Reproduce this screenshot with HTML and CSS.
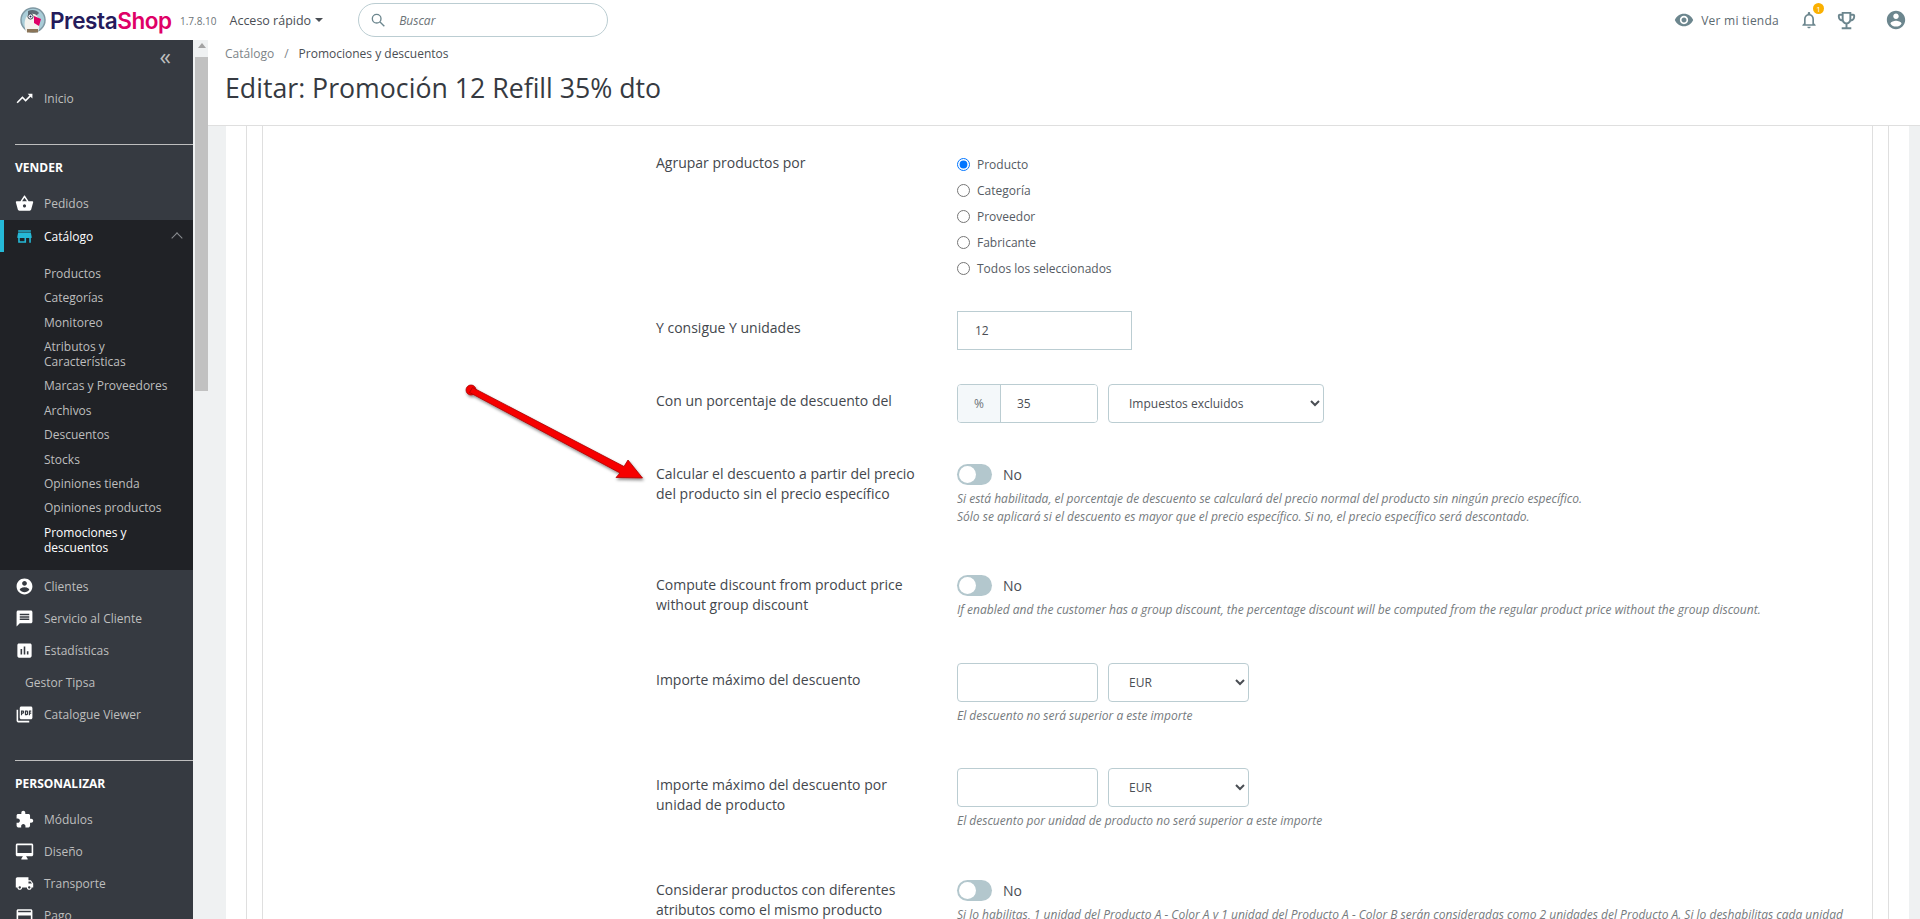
FILE: index.html
```html
<!DOCTYPE html>
<html lang="es">
<head>
    <meta charset="utf-8">
    <title>Editar: Promoción 12 Refill 35% dto</title>
    <link rel="stylesheet" href="styles.css">
</head>
<body>
    <svg class="sprite" xmlns="http://www.w3.org/2000/svg">
        <symbol id="i-trend" viewBox="0 0 24 24"><path d="M16 6l2.29 2.29-4.88 4.88-4-4L2 16.59 3.41 18l6-6 4 4 6.3-6.29L22 12V6z"/></symbol>
        <symbol id="i-basket" viewBox="0 0 24 24"><path d="M17.21 9l-4.38-6.56c-.19-.28-.51-.42-.83-.42-.32 0-.64.14-.83.43L6.79 9H2c-.55 0-1 .45-1 1 0 .09.01.18.04.27l2.54 9.27c.23.84 1 1.46 1.92 1.46h13c.92 0 1.69-.62 1.93-1.46l2.54-9.27L23 10c0-.55-.45-1-1-1h-4.79zM9 9l3-4.4L15 9H9zm3 8c-1.1 0-2-.9-2-2s.9-2 2-2 2 .9 2 2-.9 2-2 2z"/></symbol>
        <symbol id="i-store" viewBox="0 0 24 24"><path d="M20 4H4v2h16V4zm1 10v-2l-1-5H4l-1 5v2h1v6h10v-6h4v6h2v-6h1zm-9 4H6v-4h6v4z"/></symbol>
        <symbol id="i-user" viewBox="0 0 24 24"><path d="M12 2C6.48 2 2 6.48 2 12s4.48 10 10 10 10-4.48 10-10S17.52 2 12 2zm0 3c1.66 0 3 1.34 3 3s-1.34 3-3 3-3-1.34-3-3 1.34-3 3-3zm0 14.2c-2.5 0-4.71-1.28-6-3.22.03-1.99 4-3.08 6-3.08 1.99 0 5.97 1.09 6 3.08-1.29 1.94-3.5 3.22-6 3.22z"/></symbol>
        <symbol id="i-chat" viewBox="0 0 24 24"><path d="M20 2H4c-1.1 0-1.99.9-1.99 2L2 22l4-4h14c1.1 0 2-.9 2-2V4c0-1.1-.9-2-2-2zm-2 12H6v-2h12v2zm0-3H6V9h12v2zm0-3H6V6h12v2z"/></symbol>
        <symbol id="i-stats" viewBox="0 0 24 24"><path d="M19 3H5c-1.1 0-2 .9-2 2v14c0 1.1.9 2 2 2h14c1.1 0 2-.9 2-2V5c0-1.1-.9-2-2-2zM9 17H7v-7h2v7zm4 0h-2V7h2v10zm4 0h-2v-4h2v4z"/></symbol>
        <symbol id="i-pdf" viewBox="0 0 24 24"><path d="M20 2H8c-1.1 0-2 .9-2 2v12c0 1.1.9 2 2 2h12c1.1 0 2-.9 2-2V4c0-1.1-.9-2-2-2zm-8.5 7.5c0 .83-.67 1.5-1.5 1.5H9v2H7.5V7H10c.83 0 1.5.67 1.5 1.5v1zm5 2c0 .83-.67 1.5-1.5 1.5h-2.5V7H15c.83 0 1.5.67 1.5 1.5v3zm4-3H19v1h1.5V11H19v2h-1.5V7h3v1.5zM9 9.5h1v-1H9v1zM4 6H2v14c0 1.1.9 2 2 2h14v-2H4V6zm10 5.5h1v-3h-1v3z"/></symbol>
        <symbol id="i-puzzle" viewBox="0 0 24 24"><path d="M20.5 11H19V7c0-1.1-.9-2-2-2h-4V3.5C13 2.12 11.88 1 10.5 1S8 2.12 8 3.5V5H4c-1.1 0-1.99.9-1.99 2v3.8H3.5c1.49 0 2.7 1.21 2.7 2.7s-1.21 2.7-2.7 2.7H2V20c0 1.1.9 2 2 2h3.8v-1.5c0-1.49 1.21-2.7 2.7-2.7 1.49 0 2.7 1.21 2.7 2.7V22H17c1.1 0 2-.9 2-2v-4h1.5c1.38 0 2.5-1.12 2.5-2.5S21.88 11 20.5 11z"/></symbol>
        <symbol id="i-desktop" viewBox="0 0 24 24"><path d="M21 2H3c-1.1 0-2 .9-2 2v12c0 1.1.9 2 2 2h7l-2 3v1h8v-1l-2-3h7c1.1 0 2-.9 2-2V4c0-1.1-.9-2-2-2zm0 12H3V4h18v10z"/></symbol>
        <symbol id="i-truck" viewBox="0 0 24 24"><path d="M20 8h-3V4H3c-1.1 0-2 .9-2 2v11h2c0 1.66 1.34 3 3 3s3-1.34 3-3h6c0 1.66 1.34 3 3 3s3-1.34 3-3h2v-5l-3-4zM6 18.5c-.83 0-1.5-.67-1.5-1.5s.67-1.5 1.5-1.5 1.5.67 1.5 1.5-.67 1.5-1.5 1.5zm13.5-9l1.96 2.5H17V9.5h2.5zm-1.5 9c-.83 0-1.5-.67-1.5-1.5s.67-1.5 1.5-1.5 1.5.67 1.5 1.5-.67 1.5-1.5 1.5z"/></symbol>
        <symbol id="i-card" viewBox="0 0 24 24"><path d="M20 4H4c-1.11 0-1.99.89-1.99 2L2 18c0 1.11.89 2 2 2h16c1.11 0 2-.89 2-2V6c0-1.11-.89-2-2-2zm0 14H4v-6h16v6zm0-10H4V6h16v2z"/></symbol>
    </svg>

    <header class="topbar">
        <a class="logo" href="#">
            <svg class="logo-bird" viewBox="0 0 26 26" xmlns="http://www.w3.org/2000/svg">
                <circle cx="13" cy="13" r="12" fill="#a9cdd8" stroke="#7f98a3" stroke-width="1.5"/>
                <path d="M8 4c4-2 9-1 11 2l-3 3H8z" fill="#5d6b75"/>
                <path d="M6 25c-2-6-2-12 1-16 3-3 8-3 10 0 2 3 3 10 1 16z" fill="#f4f3ee"/>
                <circle cx="10.5" cy="9.5" r="2.6" fill="#fff" stroke="#3d4a55" stroke-width="1"/>
                <circle cx="10.5" cy="9.5" r="1" fill="#251b5b"/>
                <path d="M14 9l7 3-2 7-5-3z" fill="#df0067"/>
                <path d="M7 22h11v3.5H7z" fill="#8a7458"/>
            </svg>
            <span class="logo-text">Presta<span class="logo-pink">Shop</span></span>
        </a>
        <span class="version">1.7.8.10</span>
        <a class="quick" href="#">Acceso rápido<span class="caret"></span></a>
        <div class="search">
            <svg class="search-icon" viewBox="0 0 24 24" xmlns="http://www.w3.org/2000/svg"><circle cx="10" cy="10" r="6.5"/><path d="M15 15l6.5 6.5"/></svg>
            <span>Buscar</span>
        </div>
        <div class="top-right">
            <svg class="top-icon eye" viewBox="0 0 24 24" xmlns="http://www.w3.org/2000/svg"><path d="M12 4.5C7 4.5 2.73 7.61 1 12c1.73 4.39 6 7.5 11 7.5s9.27-3.11 11-7.5c-1.73-4.39-6-7.5-11-7.5zM12 17c-2.76 0-5-2.24-5-5s2.24-5 5-5 5 2.24 5 5-2.24 5-5 5zm0-8c-1.66 0-3 1.34-3 3s1.34 3 3 3 3-1.34 3-3-1.34-3-3-3z"/></svg>
            <span class="shop-link">Ver mi tienda</span>
            <span class="bell">
                <svg class="top-icon" viewBox="0 0 24 24" xmlns="http://www.w3.org/2000/svg"><path d="M12 22c1.1 0 2-.9 2-2h-4c0 1.1.9 2 2 2zm6-6v-5c0-3.07-1.63-5.64-4.5-6.32V4c0-.83-.67-1.5-1.5-1.5s-1.5.67-1.5 1.5v.68C7.64 5.36 6 7.92 6 11v5l-2 2v1h16v-1l-2-2zm-2 1H8v-6c0-2.48 1.51-4.5 4-4.5s4 2.02 4 4.5v6z"/></svg>
                <span class="badge">1</span>
            </span>
            <svg class="top-icon trophy" viewBox="0 0 24 24" xmlns="http://www.w3.org/2000/svg"><path d="M19 5h-2V3H7v2H5C3.9 5 3 5.9 3 7v1c0 2.55 1.92 4.63 4.39 4.94.63 1.5 1.98 2.63 3.61 2.96V19H7v2h10v-2h-4v-3.1c1.63-.33 2.98-1.46 3.61-2.96C19.08 12.63 21 10.55 21 8V7C21 5.9 20.1 5 19 5zM5 8V7h2v3.82C5.84 10.4 5 9.3 5 8zm7 6c-1.65 0-3-1.35-3-3V5h6v6c0 1.65-1.35 3-3 3zm7-6c0 1.3-.84 2.4-2 2.82V7h2v1z"/></svg>
            <svg class="top-icon account"><use href="#i-user"/></svg>
        </div>
    </header>

    <div class="layout">
        <nav class="sidebar">
            <div class="collapse">&laquo;</div>
            <a class="nav-item" href="#"><svg class="nav-icon"><use href="#i-trend"/></svg>Inicio</a>
            <hr class="nav-line">
            <div class="nav-title">VENDER</div>
            <a class="nav-item" href="#"><svg class="nav-icon"><use href="#i-basket"/></svg>Pedidos</a>
            <div class="nav-open">
                <a class="nav-item nav-current" href="#"><svg class="nav-icon"><use href="#i-store"/></svg>Catálogo<span class="chevron"></span></a>
                <ul class="subnav">
                    <li>Productos</li>
                    <li>Categorías</li>
                    <li>Monitoreo</li>
                    <li>Atributos y<br>Características</li>
                    <li>Marcas y Proveedores</li>
                    <li>Archivos</li>
                    <li>Descuentos</li>
                    <li>Stocks</li>
                    <li>Opiniones tienda</li>
                    <li>Opiniones productos</li>
                    <li class="sub-current">Promociones y<br>descuentos</li>
                </ul>
            </div>
            <a class="nav-item" href="#"><svg class="nav-icon"><use href="#i-user"/></svg>Clientes</a>
            <a class="nav-item" href="#"><svg class="nav-icon"><use href="#i-chat"/></svg>Servicio al Cliente</a>
            <a class="nav-item" href="#"><svg class="nav-icon"><use href="#i-stats"/></svg>Estadísticas</a>
            <a class="nav-item nav-plain" href="#">Gestor Tipsa</a>
            <a class="nav-item" href="#"><svg class="nav-icon"><use href="#i-pdf"/></svg>Catalogue Viewer</a>
            <hr class="nav-line">
            <div class="nav-title">PERSONALIZAR</div>
            <a class="nav-item" href="#"><svg class="nav-icon"><use href="#i-puzzle"/></svg>Módulos</a>
            <a class="nav-item" href="#"><svg class="nav-icon"><use href="#i-desktop"/></svg>Diseño</a>
            <a class="nav-item" href="#"><svg class="nav-icon"><use href="#i-truck"/></svg>Transporte</a>
            <a class="nav-item" href="#"><svg class="nav-icon"><use href="#i-card"/></svg>Pago</a>
        </nav>

        <div class="fake-scroll">
            <div class="scroll-arrow"></div>
            <div class="scroll-thumb"></div>
        </div>

        <main class="main">
            <div class="page-head">
                <div class="breadcrumb"><span class="crumb-link">Catálogo</span><span class="crumb-sep">/</span><span>Promociones y descuentos</span></div>
                <h1>Editar: Promoción 12 Refill 35% dto</h1>
            </div>

            <div class="page-body">
                <div class="card-outer">
                    <div class="card-inner">
                        <div class="form-row gap-30 label-first">
                            <label class="form-label">Agrupar productos por</label>
                            <div class="radios">
                                <label class="radio"><input type="radio" name="group" checked>Producto</label>
                                <label class="radio"><input type="radio" name="group">Categoría</label>
                                <label class="radio"><input type="radio" name="group">Proveedor</label>
                                <label class="radio"><input type="radio" name="group">Fabricante</label>
                                <label class="radio"><input type="radio" name="group">Todos los seleccionados</label>
                            </div>
                        </div>

                        <div class="form-row gap-34">
                            <label class="form-label">Y consigue Y unidades</label>
                            <input class="field field-square" type="text" value="12">
                        </div>

                        <div class="form-row gap-41">
                            <label class="form-label">Con un porcentaje de descuento del</label>
                            <div class="controls">
                                <div class="input-group">
                                    <span class="addon">%</span>
                                    <input type="text" value="35">
                                </div>
                                <select class="field-select select-wide"><option>Impuestos excluidos</option></select>
                            </div>
                        </div>

                        <div class="form-row gap-49 label-flat">
                            <label class="form-label">Calcular el descuento a partir del precio del producto sin el precio específico</label>
                            <div>
                                <div class="switch-row"><span class="switch"></span>No</div>
                                <p class="help">Si está habilitada, el porcentaje de descuento se calculará del precio normal del producto sin ningún precio específico.<br>Sólo se aplicará si el descuento es mayor que el precio específico. Si no, el precio específico será descontado.</p>
                            </div>
                        </div>

                        <div class="form-row gap-44 label-flat">
                            <label class="form-label">Compute discount from product price without group discount</label>
                            <div>
                                <div class="switch-row"><span class="switch"></span>No</div>
                                <p class="help">If enabled and the customer has a group discount, the percentage discount will be computed from the regular product price without the group discount.</p>
                            </div>
                        </div>

                        <div class="form-row gap-43">
                            <label class="form-label">Importe máximo del descuento</label>
                            <div>
                                <div class="controls">
                                    <input class="field field-small" type="text">
                                    <select class="field-select select-small"><option>EUR</option></select>
                                </div>
                                <p class="help">El descuento no será superior a este importe</p>
                            </div>
                        </div>

                        <div class="form-row gap-50">
                            <label class="form-label">Importe máximo del descuento por unidad de producto</label>
                            <div>
                                <div class="controls">
                                    <input class="field field-small" type="text">
                                    <select class="field-select select-small"><option>EUR</option></select>
                                </div>
                                <p class="help">El descuento por unidad de producto no será superior a este importe</p>
                            </div>
                        </div>

                        <div class="form-row label-flat">
                            <label class="form-label">Considerar productos con diferentes atributos como el mismo producto</label>
                            <div>
                                <div class="switch-row"><span class="switch"></span>No</div>
                                <p class="help">Si lo habilitas, 1 unidad del Producto A - Color A y 1 unidad del Producto A - Color B serán consideradas como 2 unidades del Producto A. Si lo deshabilitas cada unidad</p>
                            </div>
                        </div>
                    </div>
                </div>
            </div>

            <svg class="arrow" viewBox="0 0 190 110" xmlns="http://www.w3.org/2000/svg">
                <defs>
                    <filter id="arrow-shadow" x="-10%" y="-10%" width="120%" height="130%">
                        <feDropShadow dx="1" dy="2" stdDeviation="1.5" flood-color="#000" flood-opacity=".45"/>
                    </filter>
                </defs>
                <g filter="url(#arrow-shadow)" fill="#f60000" stroke="#a80000" stroke-width=".8">
                    <circle cx="9" cy="11" r="5"/>
                    <path d="M10.5 8.5L162 87.5 166 81 180.5 99 154 98.5 158 94 7.5 13.5z"/>
                </g>
            </svg>
        </main>
    </div>
</body>
</html>
```

FILE: styles.css
```css
* {
    box-sizing: border-box;
}

html, body {
    height: 100%;
}

body {
    margin: 0;
    overflow: hidden;
    font-family: "Open Sans", "Liberation Sans", sans-serif;
    font-size: 12px;
    color: #363a41;
    background-color: #eff1f2;
}

a {
    color: inherit;
    text-decoration: none;
}

.sprite {
    display: none;
}

/* top bar */
.topbar {
    display: flex;
    align-items: center;
    height: 40px;
    padding-left: 20px;
    background-color: #fff;
}

.logo {
    display: flex;
    align-items: center;
}

.logo-bird {
    width: 26px;
    height: 26px;
}

.logo-text {
    width: 119px;
    margin-left: 4px;
    font-family: "Inter", sans-serif;
    font-size: 22.5px;
    font-weight: 600;
    letter-spacing: -.4px;
    color: #251b5b;
    white-space: nowrap;
}

.logo-pink {
    color: #df0067;
}

.version {
    margin-left: 11px;
    margin-top: 2px;
    font-size: 10px;
    color: #6c7377;
}

.quick {
    display: flex;
    align-items: center;
    margin-left: 13px;
    font-size: 12.5px;
    color: #4a4e54;
}

.caret {
    margin-left: 4px;
    border-top: 4px solid #4a4e54;
    border-left: 4px solid transparent;
    border-right: 4px solid transparent;
}

.search {
    display: flex;
    align-items: center;
    width: 250px;
    height: 34px;
    margin-left: 35px;
    padding-left: 11px;
    border: 1px solid #bbcdd2;
    border-radius: 17px;
    font-style: italic;
    font-size: 12px;
    color: #6c7377;
}

.search-icon {
    width: 16px;
    height: 16px;
    margin-right: 13px;
    fill: none;
    stroke: #6c868e;
    stroke-width: 2;
}

.top-right {
    display: flex;
    align-items: center;
    margin-left: auto;
    padding-right: 13px;
}

.top-icon {
    width: 20px;
    height: 20px;
    fill: #6c868e;
}

.eye {
    margin-right: 7px;
}

.shop-link {
    margin-right: 20px;
    font-size: 12px;
    letter-spacing: .25px;
    color: #5c6a70;
}

.bell {
    position: relative;
    display: flex;
    margin-right: 16px;
}

.badge {
    position: absolute;
    top: -7px;
    right: -5px;
    width: 11px;
    height: 11px;
    border-radius: 50%;
    background-color: #fab000;
    color: #fff;
    font-size: 8px;
    line-height: 11px;
    text-align: center;
}

.trophy {
    width: 23px;
    height: 23px;
    margin-right: 27px;
}

.account {
    width: 22px;
    height: 22px;
}

/* sidebar */
.layout {
    display: flex;
    height: calc(100% - 40px);
}

.sidebar {
    flex: none;
    width: 193px;
    overflow: hidden;
    background-color: #363a41;
    color: #bebebe;
}

.collapse {
    height: 42px;
    padding-right: 22px;
    padding-top: 4px;
    text-align: right;
    font-size: 23px;
    line-height: 24px;
    color: #bebebe;
}

.nav-item {
    display: flex;
    align-items: center;
    height: 32px;
    padding-left: 15px;
    font-size: 12px;
}

.nav-icon {
    flex: none;
    width: 19px;
    height: 19px;
    margin-right: 10px;
    fill: #fff;
}

.nav-plain {
    padding-left: 25px;
}

.nav-line {
    height: 1px;
    margin: 30px 0 0 15px;
    border: 0;
    background-color: #bebebe;
}

.nav-title {
    height: 42px;
    padding-left: 15px;
    font-size: 12px;
    font-weight: 700;
    line-height: 45px;
    color: #fff;
}

.nav-open {
    margin-top: 1px;
    padding-bottom: 10.8px;
    background-color: #202226;
}

.nav-current {
    position: relative;
    color: #fff;
    border-left: 4px solid #25b9d7;
    padding-left: 11px;
}

.nav-current .nav-icon {
    fill: #25b9d7;
}

.chevron {
    position: absolute;
    top: 14px;
    right: 12px;
    width: 8px;
    height: 8px;
    border-top: 1px solid #8a8d91;
    border-left: 1px solid #8a8d91;
    transform: rotate(45deg);
}

.subnav {
    margin: 0;
    padding: 9.2px 0 0 44px;
    list-style: none;
    line-height: 15px;
}

.subnav li {
    padding: 4.7px 0;
}

.sub-current {
    color: #fff;
}

.fake-scroll {
    flex: none;
    width: 13px;
    margin-left: 2px;
    padding-top: 3px;
}

.scroll-arrow {
    width: 0;
    margin: 0 auto;
    border-bottom: 5px solid #a3a3a3;
    border-left: 4px solid transparent;
    border-right: 4px solid transparent;
}

.scroll-thumb {
    height: 334px;
    margin-top: 9px;
    background-color: #c1c1c1;
}

/* main column */
.main {
    position: relative;
    flex: 1;
    min-width: 0;
}

.page-head {
    height: 86px;
    padding: 6px 0 0 17px;
    background-color: #fff;
    border-bottom: 1px solid #dfdfdf;
}

.breadcrumb {
    line-height: 16px;
    color: #4a4e54;
}

.crumb-link {
    color: #7d8488;
}

.crumb-sep {
    margin: 0 10px;
    color: #7d8488;
}

h1 {
    margin: 8px 0 0;
    font-size: 26.7px;
    font-weight: 400;
    line-height: 36px;
    color: #363a41;
}

.page-body {
    height: 100%;
    margin: 0 11px 0 18px;
    padding: 0 20px;
    background-color: #fff;
}

.card-outer {
    height: 100%;
    padding: 0 15px;
    border-left: 1px solid #dfdfdf;
    border-right: 1px solid #dfdfdf;
}

.card-inner {
    height: 100%;
    padding: 25px 0 0 393px;
    border-left: 1px solid #dfdfdf;
    border-right: 1px solid #dfdfdf;
}

/* form rows */
.form-row {
    display: flex;
}

.gap-30 { margin-bottom: 30px; }
.gap-34 { margin-bottom: 34px; }
.gap-41 { margin-bottom: 41px; }
.gap-43 { margin-bottom: 43px; }
.gap-44 { margin-bottom: 44px; }
.gap-49 { margin-bottom: 49px; }
.gap-50 { margin-bottom: 50px; }

.form-label {
    flex: none;
    width: 271px;
    margin-right: 30px;
    padding-top: 7px;
    font-size: 14px;
    line-height: 20px;
    color: #43474d;
}

.label-flat .form-label {
    padding-top: 0;
}

.label-first .form-label {
    padding-top: 2px;
}

.radios {
    display: flex;
    flex-direction: column;
}

.radio {
    display: flex;
    align-items: center;
    height: 26px;
    color: #555b63;
}

.radio input {
    width: 13px;
    height: 13px;
    margin: 0 7px 0 0;
}

.field, .input-group, .field-select {
    height: 39px;
    border: 1px solid #bbcdd2;
    background-color: #fff;
    font-family: inherit;
    font-size: 12px;
    color: #4a4e54;
}

.field {
    padding: 0 17px;
    border-radius: 4px;
    outline: 0;
}

.field-square {
    width: 175px;
    border-radius: 0;
}

.field-small {
    width: 141px;
}

.controls {
    display: flex;
    gap: 10px;
}

.input-group {
    display: flex;
    width: 141px;
    border-radius: 4px;
    overflow: hidden;
}

.addon {
    flex: none;
    width: 43px;
    border-right: 1px solid #bbcdd2;
    background-color: #f4f8fa;
    color: #6c7377;
    font-size: 12px;
    line-height: 37px;
    text-align: center;
}

.input-group input {
    flex: 1;
    min-width: 0;
    padding: 0 16px;
    border: 0;
    outline: 0;
    font: inherit;
    color: inherit;
}

.field-select {
    padding: 0 16px;
    border-radius: 4px;
}

.select-wide {
    width: 216px;
}

.select-small {
    width: 141px;
}

.switch-row {
    display: flex;
    align-items: center;
    height: 21px;
    font-size: 14px;
    color: #4a4e54;
}

.switch {
    position: relative;
    width: 35px;
    height: 21px;
    margin-right: 11px;
    border-radius: 11px;
    background-color: #b3c7cd;
}

.switch::after {
    content: "";
    position: absolute;
    top: 2px;
    left: 2px;
    width: 17px;
    height: 17px;
    border-radius: 50%;
    background-color: #fff;
}

.help {
    margin: 5px 0 0;
    font-size: 12px;
    font-style: italic;
    line-height: 18px;
    color: #757a7d;
    white-space: nowrap;
}

.arrow {
    position: absolute;
    top: 339px;
    left: 254px;
    width: 190px;
    height: 110px;
}
```
